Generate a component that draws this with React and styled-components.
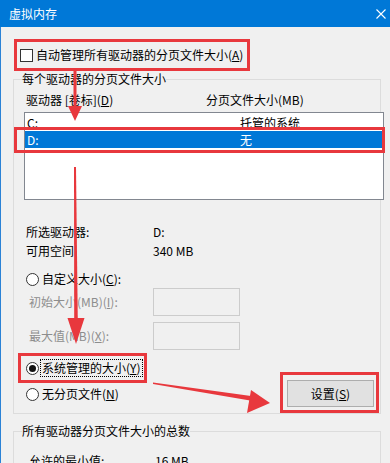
import styled, { createGlobalStyle } from 'styled-components';

const GlobalStyle = createGlobalStyle`
  html, body { margin: 0; padding: 0; }
  body {
    background: #f0f0f0;
    font-family: "Noto Sans CJK SC", "Microsoft YaHei", sans-serif;
    font-size: 12px;
    color: #000;
  }
`;

const Window = styled.div`
  position: relative;
  width: 390px;
  height: 463px;
  overflow: hidden;
  background: #f0f0f0;
`;

const TitleBar = styled.div`
  height: 27px;
  background: #0078d7;
  color: #fff;
  display: flex;
  align-items: center;
  justify-content: space-between;
  padding: 0 4px 0 9px;
  line-height: 16px;
  box-sizing: border-box;
`;

const Body = styled.div`
  border-left: 1px solid #2a82d6;
  padding: 20px 9px 0 12px;
`;

const CheckRow = styled.div`
  display: flex;
  align-items: center;
  gap: 3px;
  height: 16px;
  line-height: 16px;
  padding-left: 7px;
`;

const CheckBox = styled.span`
  width: 13px;
  height: 13px;
  box-sizing: border-box;
  border: 1px solid #333;
  background: #fff;
`;

const Group = styled.fieldset`
  margin: ${(p) => p.$mt}px 0 0;
  padding: 0;
  min-width: 0;
  border: 1px solid #dcdcdc;
`;

const Legend = styled.legend`
  margin-left: 8px;
  padding: 0;
  line-height: 16px;
`;

const GroupInner = styled.div`
  padding: 0 0 6px 10px;
`;

const HeaderRow = styled.div`
  display: grid;
  grid-template-columns: 180px 1fr;
  margin-top: 5px;
  padding-left: 2px;
  height: 16px;
  line-height: 16px;
`;

const ListBox = styled.div`
  margin: 4px -4px 0 0;
  height: 88px;
  box-sizing: border-box;
  border: 1px solid #828790;
  background: #fff;
  padding-top: 1px;
`;

const ListRow = styled.div`
  display: grid;
  grid-template-columns: 213px 1fr;
  height: 17px;
  line-height: 17px;
  padding-left: 2px;
  background: ${(p) => (p.$selected ? '#0078d7' : 'transparent')};
  color: ${(p) => (p.$selected ? '#fff' : '#000')};
`;

const InfoBlock = styled.div`
  display: flex;
  flex-direction: column;
  gap: 3px;
  margin-top: ${(p) => p.$mt}px;
  padding-left: ${(p) => p.$pl}px;
`;

const InfoRow = styled.div`
  display: grid;
  grid-template-columns: ${(p) => p.$col}px 1fr;
  height: 16px;
  line-height: 16px;
`;

const RadioRow = styled.div`
  display: flex;
  align-items: center;
  gap: 1px;
  height: ${(p) => p.$h}px;
  margin-top: ${(p) => p.$mt || 0}px;
  padding-left: 2px;
`;

const Radio = styled.span`
  width: 13px;
  height: 13px;
  box-sizing: border-box;
  border-radius: 50%;
  border: 1px solid #333;
  background: #fff;
  display: flex;
  align-items: center;
  justify-content: center;
  &::after {
    content: '';
    width: 7px;
    height: 7px;
    border-radius: 50%;
    background: ${(p) => (p.$checked ? '#111' : 'transparent')};
  }
`;

const RadioLabel = styled.span`
  padding: 0 1px;
  line-height: 16px;
  border: 1px dotted ${(p) => (p.$focused ? '#000' : 'transparent')};
`;

const Fields = styled.div`
  display: flex;
  flex-direction: column;
  gap: 6px;
  padding-left: 5px;
`;

const FieldRow = styled.div`
  display: grid;
  grid-template-columns: 124px 87px;
  align-items: center;
  height: 28px;
  color: #8d8d8d;
  line-height: 16px;
`;

const TextBox = styled.div`
  height: 28px;
  box-sizing: border-box;
  border: 1px solid #cccccc;
  background: #f0f0f0;
`;

const BottomArea = styled.div`
  display: flex;
  justify-content: space-between;
  align-items: flex-end;
  margin-top: 8px;
`;

const RadioColumn = styled.div`
  display: flex;
  flex-direction: column;
  gap: 6px;
  margin-bottom: 3px;
`;

const Button = styled.div`
  width: 87px;
  height: 27px;
  box-sizing: border-box;
  margin-right: 6px;
  border: 1px solid #adadad;
  background: #e1e1e1;
  display: flex;
  align-items: center;
  justify-content: center;
  line-height: 16px;
`;

const Key = styled.span`
  text-decoration: underline;
  text-underline-offset: 1px;
`;

const Overlay = styled.svg`
  position: absolute;
  left: 0;
  top: 0;
  pointer-events: none;
`;

const RED = '#e8383d';

function Annotations() {
  const rects = [
    [15.5, 40.5, 233, 29],
    [15.5, 128.5, 368, 23],
    [19.5, 354.5, 126, 27],
    [281.5, 373.5, 96, 38],
  ];
  return (
    <Overlay width="390" height="463" viewBox="0 0 390 463">
      {rects.map(([x, y, w, h], i) => (
        <rect key={i} x={x} y={y} width={w} height={h} fill="none" stroke={RED} strokeWidth="3" />
      ))}
      <polygon points="73.5,71 76.5,71 76.5,108 73.5,108" fill={RED} />
      <polygon points="68,106 82,106 75,121" fill={RED} />
      <polygon points="74,167 76,167 77.8,322 74.2,322" fill={RED} />
      <polygon points="67.5,318 84.5,318 76,344" fill={RED} />
      <polygon points="153,382.5 153,384 250,400.5 251,396" fill={RED} />
      <polygon points="251,390 270,403 247,413" fill={RED} />
    </Overlay>
  );
}

export default function App() {
  return (
    <Window>
      <GlobalStyle />
      <TitleBar>
        <span>虚拟内存</span>
        <svg width="10" height="10" viewBox="0 0 10 10">
          <path d="M0.5 0.5 L9.5 9.5 M9.5 0.5 L0.5 9.5" stroke="#fff" strokeWidth="1.1" />
        </svg>
      </TitleBar>
      <Body>
        <CheckRow>
          <CheckBox />
          <span>
            自动管理所有驱动器的分页文件大小(<Key>A</Key>)
          </span>
        </CheckRow>

        <Group $mt={8}>
          <Legend>每个驱动器的分页文件大小</Legend>
          <GroupInner>
            <HeaderRow>
              <span>
                驱动器 [卷标](<Key>D</Key>)
              </span>
              <span>分页文件大小(MB)</span>
            </HeaderRow>
            <ListBox>
              <ListRow>
                <span>C:</span>
                <span>托管的系统</span>
              </ListRow>
              <ListRow $selected>
                <span>D:</span>
                <span>无</span>
              </ListRow>
            </ListBox>

            <InfoBlock $mt={24} $pl={2}>
              <InfoRow $col={127}>
                <span>所选驱动器:</span>
                <span>D:</span>
              </InfoRow>
              <InfoRow $col={127}>
                <span>可用空间</span>
                <span>340 MB</span>
              </InfoRow>
            </InfoBlock>

            <RadioRow $h={18} $mt={11}>
              <Radio />
              <RadioLabel>
                自定义大小(<Key>C</Key>):
              </RadioLabel>
            </RadioRow>
            <Fields>
              <FieldRow>
                <span>
                  初始大小(MB)(<Key>I</Key>):
                </span>
                <TextBox />
              </FieldRow>
              <FieldRow>
                <span>
                  最大值(MB)(<Key>X</Key>):
                </span>
                <TextBox />
              </FieldRow>
            </Fields>

            <BottomArea>
              <RadioColumn>
                <RadioRow $h={20}>
                  <Radio $checked />
                  <RadioLabel $focused>
                    系统管理的大小(<Key>Y</Key>)
                  </RadioLabel>
                </RadioRow>
                <RadioRow $h={20}>
                  <Radio />
                  <RadioLabel>
                    无分页文件(<Key>N</Key>)
                  </RadioLabel>
                </RadioRow>
              </RadioColumn>
              <Button>
                <span>
                  设置(<Key>S</Key>)
                </span>
              </Button>
            </BottomArea>
          </GroupInner>
        </Group>

        <Group $mt={9}>
          <Legend>所有驱动器分页文件大小的总数</Legend>
          <InfoBlock $mt={14} $pl={15}>
            <InfoRow $col={126}>
              <span>允许的最小值:</span>
              <span>16 MB</span>
            </InfoRow>
          </InfoBlock>
        </Group>
      </Body>
      <Annotations />
    </Window>
  );
}
